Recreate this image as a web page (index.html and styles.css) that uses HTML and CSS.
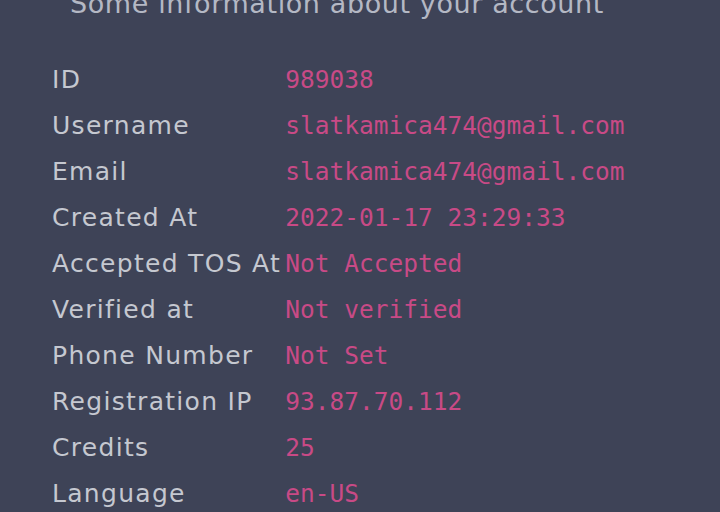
FILE: index.html
```html
<!DOCTYPE html>
<html lang="en">
<head>
<meta charset="utf-8">
<title>Account</title>
<link rel="stylesheet" href="styles.css">
</head>
<body>
<main class="account">
  <h2 class="subtitle">Some information about your account</h2>
  <dl class="info">
    <dt>ID</dt><dd>989038</dd>
    <dt>Username</dt><dd>slatkamica474@gmail.com</dd>
    <dt>Email</dt><dd>slatkamica474@gmail.com</dd>
    <dt>Created At</dt><dd>2022-01-17 23:29:33</dd>
    <dt>Accepted TOS At</dt><dd>Not Accepted</dd>
    <dt>Verified at</dt><dd>Not verified</dd>
    <dt>Phone Number</dt><dd>Not Set</dd>
    <dt>Registration IP</dt><dd>93.87.70.112</dd>
    <dt>Credits</dt><dd>25</dd>
    <dt>Language</dt><dd>en-US</dd>
  </dl>
</main>
</body>
</html>
```

FILE: styles.css
```css
html, body {
  margin: 0;
  padding: 0;
  background: #3e4357;
  height: 100%;
  overflow: hidden;
}
.account {
  padding: 0 0 0 52px;
  font-family: "DejaVu Sans", Inter, sans-serif;
}
.subtitle {
  margin: -14px 0 0 18px;
  font-size: 27px;
  line-height: 36px;
  font-weight: 400;
  color: #b4b8c4;
  letter-spacing: 0.6px;
}
.info {
  display: grid;
  grid-template-columns: max-content 1fr;
  grid-auto-rows: 46px;
  align-items: center;
  margin: 34px 0 0 0;
}
.info dt {
  font-size: 25px;
  color: #c5c8d0;
  letter-spacing: 1.3px;
}
.info dd {
  margin: 0 0 0 4px;
  font-family: "DejaVu Sans Mono", "Liberation Mono", monospace;
  font-size: 24.5px;
  color: #c84a86;
}
```
